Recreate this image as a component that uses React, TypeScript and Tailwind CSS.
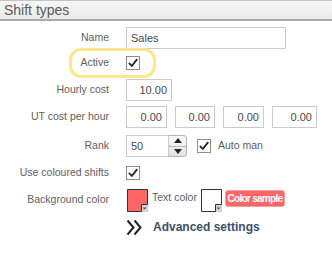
import React from 'react';

function Check() {
  return (
    <div className="w-[14px] h-[14px] border border-[#8c8c8c] bg-white flex items-center justify-center">
      <svg width="12" height="12" viewBox="0 0 12 12">
        <path d="M2.4 6.4 L4.8 9 L9.8 2.6" fill="none" stroke="#222" strokeWidth="1.8" strokeLinecap="round" strokeLinejoin="round" />
      </svg>
    </div>
  );
}

function Swatch({ color }: { color: string }) {
  return (
    <svg width="21" height="23" viewBox="0 0 21 23">
      <rect x="0" y="0" width="21" height="23" fill="#d4d4d4" />
      <path d="M0.5 0.5 H20.5 V15.5 H14.5 V22.5 H0.5 Z" fill={color} stroke="#333" strokeWidth="1" />
      <path d="M15.5 18.5 L19.5 18.5 L17.5 20.5 Z" fill="#555" />
    </svg>
  );
}

function Row({ label, children, className = '' }: { label: string; children?: React.ReactNode; className?: string }) {
  return (
    <div className={`grid grid-cols-[109px_1fr] gap-x-[17px] items-center h-[22px] ${className}`}>
      <div className="text-right text-[10.5px] text-[#606060]">{label}</div>
      <div className="flex items-center">{children}</div>
    </div>
  );
}

const inputCls = 'h-[22px] border border-[#cacaca] bg-white text-[11px] text-[#4a4a4a] flex items-center px-[4px]';

export default function App() {
  return (
    <div className="w-[332px] h-[257px] bg-white relative font-['Liberation_Sans',Arial,sans-serif]">
      <div className="h-[21px] border-t border-[#c4c4c4] border-b-[2px] border-b-[#a9a9a9] bg-gradient-to-b from-[#f7f7f7] to-[#e9e9e9] flex items-center px-[4px]">
        <span className="text-[14px] text-[#595959] leading-none">Shift types</span>
      </div>

      <div className="absolute left-[69px] top-[48px] w-[87px] h-[30px] border-[3px] border-[#fde68c] rounded-[12px]" />

      <div className="flex flex-col pt-[6px]">
        <Row label="Name">
          <div className={`${inputCls} w-[160px]`}>Sales</div>
        </Row>
        <Row label="Active" className="mt-[3px]">
          <Check />
        </Row>
        <Row label="Hourly cost" className="mt-[5px]">
          <div className={`${inputCls} w-[46px] justify-end`}>10.00</div>
        </Row>
        <Row label="UT cost per hour" className="mt-[5px]">
          <div className="flex gap-[8px]">
            <div className={`${inputCls} w-[41px] justify-end`}>0.00</div>
            <div className={`${inputCls} w-[40px] justify-end`}>0.00</div>
            <div className={`${inputCls} w-[41px] justify-end`}>0.00</div>
            <div className={`${inputCls} w-[45px] justify-end`}>0.00</div>
          </div>
        </Row>
        <Row label="Rank" className="mt-[7px]">
          <div className="flex h-[22px]">
            <div className={`${inputCls} w-[43px]`}>50</div>
            <div className="w-[18px] h-[22px] border border-l-0 border-[#b5b5b5] rounded-r-[4px] bg-gradient-to-b from-[#fafafa] to-[#e2e2e2] flex flex-col">
              <div className="flex-1 flex items-center justify-center border-b border-[#b5b5b5]">
                <svg width="8" height="5" viewBox="0 0 8 5"><path d="M0 5 L4 0 L8 5 Z" fill="#222" /></svg>
              </div>
              <div className="flex-1 flex items-center justify-center">
                <svg width="8" height="5" viewBox="0 0 8 5"><path d="M0 0 L4 5 L8 0 Z" fill="#222" /></svg>
              </div>
            </div>
            <div className="ml-[10px] flex items-start pt-[4px] gap-[7px]">
              <Check />
              <span className="text-[10.5px] text-[#606060] leading-[12px]">Auto man</span>
            </div>
          </div>
        </Row>
        <Row label="Use coloured shifts" className="mt-[5px]">
          <Check />
        </Row>
        <Row label="Background color" className="mt-[5px]">
          <div className="flex items-start h-[22px] ml-[1px]">
            <Swatch color="#ff6666" />
            <span className="ml-[4px] text-[10.5px] text-[#606060] leading-[13px] pt-[2px]">Text color</span>
            <div className="ml-[4px]"><Swatch color="#ffffff" /></div>
            <div className="ml-[3px] mt-[1px] w-[60px] h-[17px] rounded-[3px] bg-[#ff6666] border border-[#f3a0a0] text-white font-bold text-[10px] tracking-[-0.7px] whitespace-nowrap flex items-center justify-center">
              Color sample
            </div>
          </div>
        </Row>
        <Row label="" className="mt-[5px]">
          <div className="flex items-center">
            <svg width="17" height="17" viewBox="0 0 17 17">
              <path d="M1.5 1.5 L7.5 8.5 L1.5 15.5 M8.5 1.5 L14.5 8.5 L8.5 15.5" fill="none" stroke="#222" strokeWidth="2" />
            </svg>
            <span className="ml-[10px] text-[12px] font-bold text-[#3d5068]">Advanced settings</span>
          </div>
        </Row>
      </div>
    </div>
  );
}
